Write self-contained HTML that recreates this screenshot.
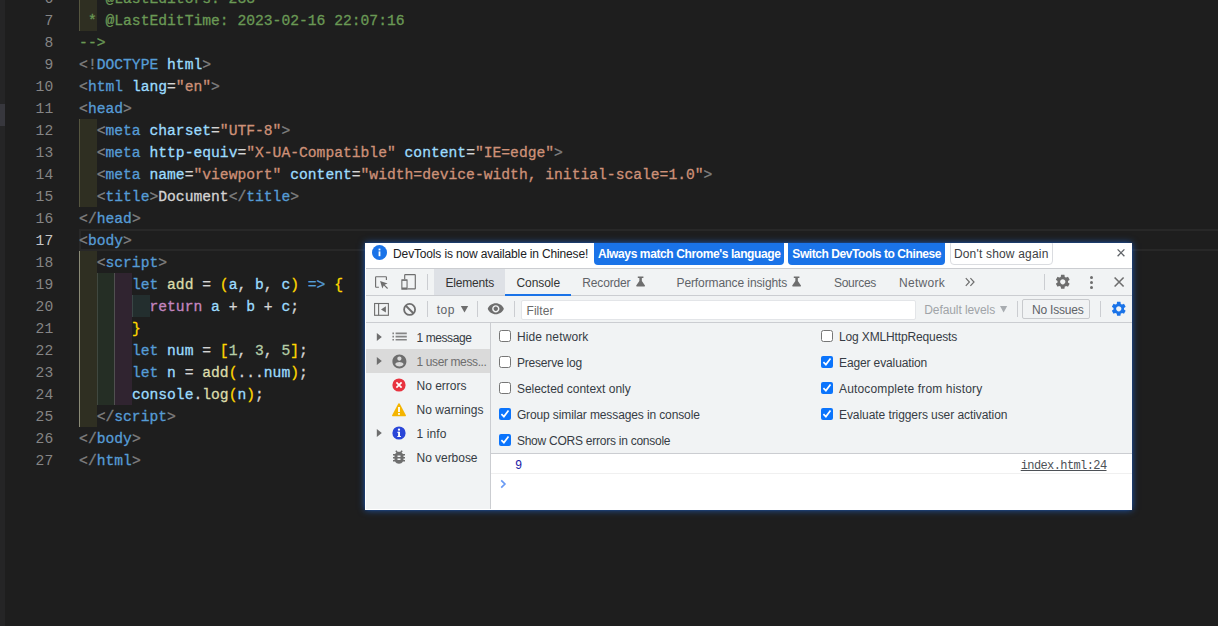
<!DOCTYPE html>
<html>
<head>
<meta charset="utf-8">
<style>
*{box-sizing:border-box;margin:0;padding:0}
html,body{width:1218px;height:626px;overflow:hidden;background:#1e1e1e}
body{position:relative;font-family:"Liberation Sans",sans-serif}
#strip{position:absolute;left:0;top:0;width:5px;height:626px;background:#252526}
#strip i{position:absolute;left:0;top:104px;width:5px;height:22px;background:#37373d}
#ed{position:absolute;left:0;top:-13px;width:1218px;font-family:"Liberation Mono",monospace;font-size:14.667px;line-height:22px;color:#d4d4d4}
.l{position:relative;height:22px}
.n{position:absolute;top:1px;left:18px;width:35.2px;text-align:right;color:#858585}
.c{position:absolute;left:79.1px;top:1px;-webkit-text-stroke:0.3px;white-space:pre}
.cur .n{color:#c6c6c6}
.cur:before{content:"";position:absolute;left:79px;right:0;top:0;height:18px;border:2px solid #282828;border-right:0}
.g{position:absolute;top:0;height:22px}
.g0{left:79px;width:18px;background:#2f2f22;border-left:1px solid #55553f}
.g1{left:97px;width:17px;background:#252e25;border-left:1px solid #404840}
.g2{left:114px;width:18px;background:#302430;border-left:1px solid #505050}
.ga{border-left-color:#8a8a76 !important}
.g3{left:132px;width:18px;background:#232e2e;border-left:1px solid #3a4646}
.cm{color:#6a9955}.gr{color:#808080}.bl{color:#569cd6}.lb{color:#9cdcfe}.or{color:#ce9178}
.ye{color:#ffd700}.fn{color:#dcdcaa}.pk{color:#c586c0}.nu{color:#b5cea8}

#dt{position:absolute;left:365px;top:243px;width:767px;height:267px;overflow:hidden;background:#fff;font-family:"Liberation Sans",sans-serif;font-size:12px;line-height:16px}
#sh{position:absolute;left:365px;top:243px;width:767px;height:267px;box-shadow:0 0 7px rgba(32,105,215,.78),0 0 1.5px rgba(24,60,120,.9)}
#dt div,#dt svg,#dt .t{position:absolute}
#dt .t{white-space:pre;height:16px}
#dt .m{font-family:"Liberation Mono",monospace}
</style>
</head>
<body>
<div id="strip"><i></i></div>
<div id="ed">
<div class="l"><span class="n">6</span><i class="g g0"></i><span class="c cm"> * @LastEditors: 233</span></div>
<div class="l"><span class="n">7</span><i class="g g0"></i><span class="c cm"> * @LastEditTime: 2023-02-16 22:07:16</span></div>
<div class="l"><span class="n">8</span><span class="c cm">--&gt;</span></div>
<div class="l"><span class="n">9</span><span class="c"><span class="gr">&lt;!</span><span class="bl">DOCTYPE</span> <span class="lb">html</span><span class="gr">&gt;</span></span></div>
<div class="l"><span class="n">10</span><span class="c"><span class="gr">&lt;</span><span class="bl">html</span> <span class="lb">lang</span>=<span class="or">"en"</span><span class="gr">&gt;</span></span></div>
<div class="l"><span class="n">11</span><span class="c"><span class="gr">&lt;</span><span class="bl">head</span><span class="gr">&gt;</span></span></div>
<div class="l"><span class="n">12</span><i class="g g0"></i><span class="c">  <span class="gr">&lt;</span><span class="bl">meta</span> <span class="lb">charset</span>=<span class="or">"UTF-8"</span><span class="gr">&gt;</span></span></div>
<div class="l"><span class="n">13</span><i class="g g0"></i><span class="c">  <span class="gr">&lt;</span><span class="bl">meta</span> <span class="lb">http-equiv</span>=<span class="or">"X-UA-Compatible"</span> <span class="lb">content</span>=<span class="or">"IE=edge"</span><span class="gr">&gt;</span></span></div>
<div class="l"><span class="n">14</span><i class="g g0"></i><span class="c">  <span class="gr">&lt;</span><span class="bl">meta</span> <span class="lb">name</span>=<span class="or">"viewport"</span> <span class="lb">content</span>=<span class="or">"width=device-width, initial-scale=1.0"</span><span class="gr">&gt;</span></span></div>
<div class="l"><span class="n">15</span><i class="g g0"></i><span class="c">  <span class="gr">&lt;</span><span class="bl">title</span><span class="gr">&gt;</span>Document<span class="gr">&lt;/</span><span class="bl">title</span><span class="gr">&gt;</span></span></div>
<div class="l"><span class="n">16</span><span class="c"><span class="gr">&lt;/</span><span class="bl">head</span><span class="gr">&gt;</span></span></div>
<div class="l cur"><span class="n">17</span><span class="c"><span class="gr">&lt;</span><span class="bl">body</span><span class="gr">&gt;</span></span></div>
<div class="l"><span class="n">18</span><i class="g g0 ga"></i><span class="c">  <span class="gr">&lt;</span><span class="bl">script</span><span class="gr">&gt;</span></span></div>
<div class="l"><span class="n">19</span><i class="g g0 ga"></i><i class="g g1"></i><i class="g g2"></i><span class="c">      <span class="bl">let</span> <span class="fn">add</span> = <span class="ye">(</span><span class="lb">a</span>, <span class="lb">b</span>, <span class="lb">c</span><span class="ye">)</span> <span class="bl">=&gt;</span> <span class="ye">{</span></span></div>
<div class="l"><span class="n">20</span><i class="g g0 ga"></i><i class="g g1"></i><i class="g g2"></i><i class="g g3"></i><span class="c">        <span class="pk">return</span> <span class="lb">a</span> + <span class="lb">b</span> + <span class="lb">c</span>;</span></div>
<div class="l"><span class="n">21</span><i class="g g0 ga"></i><i class="g g1"></i><i class="g g2"></i><span class="c">      <span class="ye">}</span></span></div>
<div class="l"><span class="n">22</span><i class="g g0 ga"></i><i class="g g1"></i><i class="g g2"></i><span class="c">      <span class="bl">let</span> <span class="lb">num</span> = <span class="ye">[</span><span class="nu">1</span>, <span class="nu">3</span>, <span class="nu">5</span><span class="ye">]</span>;</span></div>
<div class="l"><span class="n">23</span><i class="g g0 ga"></i><i class="g g1"></i><i class="g g2"></i><span class="c">      <span class="bl">let</span> <span class="lb">n</span> = <span class="fn">add</span><span class="ye">(</span>...<span class="lb">num</span><span class="ye">)</span>;</span></div>
<div class="l"><span class="n">24</span><i class="g g0 ga"></i><i class="g g1"></i><i class="g g2"></i><span class="c">      <span class="lb">console</span>.<span class="fn">log</span><span class="ye">(</span><span class="lb">n</span><span class="ye">)</span>;</span></div>
<div class="l"><span class="n">25</span><i class="g g0 ga"></i><span class="c">  <span class="gr">&lt;/</span><span class="bl">script</span><span class="gr">&gt;</span></span></div>
<div class="l"><span class="n">26</span><span class="c"><span class="gr">&lt;/</span><span class="bl">body</span><span class="gr">&gt;</span></span></div>
<div class="l"><span class="n">27</span><span class="c"><span class="gr">&lt;/</span><span class="bl">html</span><span class="gr">&gt;</span></span></div>
</div>
<div id="sh"></div>
<div id="dt">
<div style="left:0px;top:0px;width:767px;height:25px;background:#fff"></div>
<div style="left:0px;top:25px;width:767px;height:1px;background:#cbcdd1"></div>
<svg style="left:7.4px;top:2.3px" width="15" height="15" viewBox="0 0 15 15"><circle cx="7.5" cy="7.5" r="7.5" fill="#1a73e8"/><rect x="6.6" y="6.4" width="1.8" height="4.8" fill="#fff"/><rect x="6.6" y="3.6" width="1.8" height="1.8" fill="#fff"/></svg>
<div style="left:229px;top:-3px;width:190px;height:25px;background:#1a73e8;border-radius:4px"></div>
<div style="left:423px;top:-3px;width:157px;height:25px;background:#1a73e8;border-radius:4px"></div>
<div style="left:584.5px;top:-3px;width:103px;height:25px;background:#fff;border:1px solid #dadce0;border-radius:4px"></div>
<svg style="left:751px;top:5px" width="10" height="10" viewBox="0 0 10 10"><path d="M1.6 1.4l6.8 6.8M8.4 1.4L1.6 8.2" stroke="#5f6368" stroke-width="1.3" fill="none"/></svg>
<div style="left:0px;top:26px;width:767px;height:26px;background:#f1f3f4"></div>
<div style="left:0px;top:52px;width:767px;height:1px;background:#cbcdd1"></div>
<div style="left:69px;top:26px;width:71px;height:26px;background:#dee1e6"></div>
<div style="left:140px;top:50.5px;width:66px;height:2px;background:#1a73e8"></div>
<svg style="left:7px;top:30px" width="18" height="18" viewBox="372 273 18 18"><path d="M378.9 287.2h-2.8a.5 .5 0 0 1-.5-.5v-9.500a.5 .5 0 0 1 .5-.5h9.800a.5 .5 0 0 1 .5 .5v2.700" fill="none" stroke="#6e6e6e" stroke-width="1.15"/><path d="M380.1 281.1l7.5 2.3-3 1.4 3.4 3.3-.8.8-3.4-3.3-1.5 2.9z" fill="#6e6e6e"/></svg>
<svg style="left:34px;top:29px" width="19" height="19" viewBox="399 272 19 19"><path d="M404.7 279.3v-4.100a.5 .5 0 0 1 .5-.5h9.600a.5 .5 0 0 1 .5 .5v13.200a.5 .5 0 0 1-.5 .5h-7.300" fill="none" stroke="#6e6e6e" stroke-width="1.15"/><rect x="401.3" y="279.2" width="6.3" height="10.6" rx=".6" fill="#6e6e6e"/><rect x="402.4" y="280.9" width="4.1" height="6.6" fill="#f1f3f4"/></svg>
<div style="left:62px;top:31px;width:1px;height:16px;background:#cbcdd1"></div>
<svg style="left:269.5px;top:32px" width="11" height="13" viewBox="-1 275 11 13"><path d="M1.8 276.6h5.6v1.3h-1.55v3.1l3.1 4.6q.4.8-.5.8h-7.7q-.9 0-.5-.8l3.1-4.6v-3.1H1.8z" fill="#6e6e6e"/></svg>
<svg style="left:426.3px;top:32px" width="11" height="13" viewBox="-1 275 11 13"><path d="M1.8 276.6h5.6v1.3h-1.55v3.1l3.1 4.6q.4.8-.5.8h-7.7q-.9 0-.5-.8l3.1-4.6v-3.1H1.8z" fill="#6e6e6e"/></svg>
<svg style="left:599px;top:33px" width="12" height="12" viewBox="964 276 12 12"><path d="M965.8 278.2l3.6 3.8-3.6 3.8M970.4 278.2l3.6 3.8-3.6 3.8" fill="none" stroke="#6e6e6e" stroke-width="1.2"/></svg>
<div style="left:679px;top:31px;width:1px;height:16px;background:#cbcdd1"></div>
<svg style="left:689.2px;top:30.2px" width="17.5" height="17.5" viewBox="0 0 24 24"><path fill="#6e6e6e" d="M19.14 12.94c.04-.3.06-.61.06-.94 0-.32-.02-.64-.07-.94l2.03-1.58c.18-.14.23-.41.12-.61l-1.92-3.32c-.12-.22-.37-.29-.59-.22l-2.39.96c-.5-.38-1.03-.7-1.62-.94l-.36-2.54c-.04-.24-.24-.41-.48-.41h-3.84c-.24 0-.43.17-.47.41l-.36 2.54c-.59.24-1.13.57-1.62.94l-2.39-.96c-.22-.08-.47 0-.59.22L2.74 8.87c-.12.21-.08.47.12.61l2.03 1.58c-.05.3-.09.63-.09.94s.02.64.07.94l-2.03 1.58c-.18.14-.23.41-.12.61l1.92 3.32c.12.22.37.29.59.22l2.39-.96c.5.38 1.03.7 1.62.94l.36 2.54c.05.24.24.41.48.41h3.84c.24 0 .44-.17.47-.41l.36-2.54c.59-.24 1.13-.56 1.62-.94l2.39.96c.22.08.47 0 .59-.22l1.92-3.32c.12-.22.07-.47-.12-.61l-2.01-1.58zM12 15.6c-1.98 0-3.6-1.62-3.6-3.6s1.62-3.6 3.6-3.6 3.6 1.62 3.6 3.6-1.62 3.6-3.6 3.6z"/></svg>
<div style="left:724.9px;top:32.8px;width:3.2px;height:3.2px;background:#6e6e6e;border-radius:50%"></div>
<div style="left:724.9px;top:37.7px;width:3.2px;height:3.2px;background:#6e6e6e;border-radius:50%"></div>
<div style="left:724.9px;top:42.6px;width:3.2px;height:3.2px;background:#6e6e6e;border-radius:50%"></div>
<svg style="left:748px;top:33px" width="12" height="12" viewBox="1113 276 12 12"><path d="M1114.6 277.5l9 9M1123.6 277.5l-9 9" stroke="#6e6e6e" stroke-width="1.6" fill="none"/></svg>
<div style="left:0px;top:53px;width:767px;height:26px;background:#f1f3f4"></div>
<div style="left:0px;top:79px;width:767px;height:1px;background:#cbcdd1"></div>
<svg style="left:8px;top:59px" width="17" height="15" viewBox="373 302 17 15"><rect x="374.6" y="303.5" width="13.8" height="11.8" fill="none" stroke="#6e6e6e" stroke-width="1.1"/><path d="M378.6 303.5v11.8" stroke="#6e6e6e" stroke-width="1.1"/><path d="M381 309.4l4.9-3.1v6.2z" fill="#6e6e6e"/></svg>
<svg style="left:37px;top:59px" width="15" height="15" viewBox="402 302 15 15"><circle cx="409.6" cy="309.45" r="5.5" fill="none" stroke="#6e6e6e" stroke-width="1.8"/><path d="M405.6 305.5l8 8" stroke="#6e6e6e" stroke-width="1.8"/></svg>
<div style="left:62px;top:58px;width:1px;height:16px;background:#cbcdd1"></div>
<svg style="left:95px;top:62px" width="9" height="9" viewBox="460 305 9 9"><path d="M460.8 306h7.4l-3.7 6.6z" fill="#6e6e6e"/></svg>
<div style="left:112px;top:58px;width:1px;height:16px;background:#cbcdd1"></div>
<svg style="left:122.2px;top:57.3px" width="17.6" height="17.6" viewBox="0 0 24 24"><path fill="#6e6e6e" d="M12 4.5C7 4.5 2.73 7.61 1 12c1.73 4.39 6 7.5 11 7.5s9.27-3.11 11-7.5c-1.73-4.39-6-7.5-11-7.5zM12 17c-2.76 0-5-2.24-5-5s2.24-5 5-5 5 2.24 5 5-2.24 5-5 5zm0-8c-1.66 0-3 1.34-3 3s1.34 3 3 3 3-1.34 3-3-1.34-3-3-3z"/></svg>
<div style="left:149px;top:58px;width:1px;height:16px;background:#cbcdd1"></div>
<div style="left:156px;top:56.5px;width:395px;height:20px;background:#fff;border:1px solid #e3e5e8;border-radius:2px"></div>
<svg style="left:634px;top:62px" width="9" height="9" viewBox="999 305 9 9"><path d="M1000 306h7.2l-3.6 6.4z" fill="#a8acb0"/></svg>
<div style="left:652px;top:58px;width:1px;height:16px;background:#cbcdd1"></div>
<div style="left:657px;top:56px;width:68px;height:19.5px;border:1px solid #c8cacd;border-radius:2px"></div>
<div style="left:735px;top:58px;width:1px;height:16px;background:#cbcdd1"></div>
<svg style="left:745.2px;top:57.2px" width="17.5" height="17.5" viewBox="0 0 24 24"><path fill="#1a73e8" d="M19.14 12.94c.04-.3.06-.61.06-.94 0-.32-.02-.64-.07-.94l2.03-1.58c.18-.14.23-.41.12-.61l-1.92-3.32c-.12-.22-.37-.29-.59-.22l-2.39.96c-.5-.38-1.03-.7-1.62-.94l-.36-2.54c-.04-.24-.24-.41-.48-.41h-3.84c-.24 0-.43.17-.47.41l-.36 2.54c-.59.24-1.13.57-1.62.94l-2.39-.96c-.22-.08-.47 0-.59.22L2.74 8.87c-.12.21-.08.47.12.61l2.03 1.58c-.05.3-.09.63-.09.94s.02.64.07.94l-2.03 1.58c-.18.14-.23.41-.12.61l1.92 3.32c.12.22.37.29.59.22l2.39-.96c.5.38 1.03.7 1.62.94l.36 2.54c.05.24.24.41.48.41h3.84c.24 0 .44-.17.47-.41l.36-2.54c.59-.24 1.13-.56 1.62-.94l2.39.96c.22.08.47 0 .59-.22l1.92-3.32c.12-.22.07-.47-.12-.61l-2.01-1.58zM12 15.6c-1.98 0-3.6-1.62-3.6-3.6s1.62-3.6 3.6-3.6 3.6 1.62 3.6 3.6-1.62 3.6-3.6 3.6z"/></svg>
<div style="left:0px;top:80px;width:125px;height:187px;background:#f1f3f4"></div>
<div style="left:125px;top:80px;width:1px;height:187px;background:#cbcdd1"></div>
<div style="left:0px;top:106px;width:125px;height:24px;background:#dadada"></div>
<svg style="left:11px;top:89px" width="7" height="10" viewBox="0 0 7 10"><path d="M0.8 0.9l5 4.1-5 4.1z" fill="#6e6e6e"/></svg>
<svg style="left:11px;top:113px" width="7" height="10" viewBox="0 0 7 10"><path d="M0.8 0.9l5 4.1-5 4.1z" fill="#6e6e6e"/></svg>
<svg style="left:11px;top:185px" width="7" height="10" viewBox="0 0 7 10"><path d="M0.8 0.9l5 4.1-5 4.1z" fill="#6e6e6e"/></svg>
<svg style="left:24.6px;top:84.4px" width="19.2" height="19.2" viewBox="0 0 24 24"><path fill="#858585" d="M3 13h2v-2H3v2zm0 4h2v-2H3v2zm0-8h2V7H3v2zm4 4h14v-2H7v2zm0 4h14v-2H7v2zM7 7v2h14V7H7z"/></svg>
<svg style="left:25.6px;top:109.6px" width="16.8" height="16.8" viewBox="0 0 24 24"><path fill="#6e6e6e" d="M12 2C6.48 2 2 6.48 2 12s4.48 10 10 10 10-4.48 10-10S17.52 2 12 2zm0 3c1.66 0 3 1.34 3 3s-1.34 3-3 3-3-1.34-3-3 1.34-3 3-3zm0 14.2c-2.5 0-4.71-1.28-6-3.22.03-1.99 4-3.08 6-3.08 1.99 0 5.97 1.09 6 3.08-1.29 1.94-3.5 3.22-6 3.22z"/></svg>
<svg style="left:27px;top:135px" width="14" height="14" viewBox="0 0 14 14"><circle cx="7" cy="7" r="6.6" fill="#e8333f"/><path d="M4.4 4.4l5.2 5.2M9.6 4.4L4.4 9.6" stroke="#fff" stroke-width="1.7"/></svg>
<svg style="left:26px;top:158.7px" width="16" height="16" viewBox="0 0 16 16"><path d="M8 1.2q.5 0 .8.5l6.1 11.6q.4.9-.6.9H1.700q-1 0-.6-.9L7.200 1.700q.3-.5.8-.5z" fill="#f4b400"/><rect x="7.1" y="5" width="1.8" height="5" fill="#fff"/><rect x="7.1" y="11" width="1.8" height="1.8" fill="#fff"/></svg>
<svg style="left:27px;top:183px" width="14" height="14" viewBox="0 0 14 14"><circle cx="7" cy="7" r="6.6" fill="#2a46d8"/><rect x="6.1" y="5.800" width="1.9" height="5" fill="#fff"/><rect x="5.3" y="5.800" width="2" height="1" fill="#fff"/><rect x="5.3" y="10" width="3.600" height="1" fill="#fff"/><circle cx="7" cy="3.700" r="1.150" fill="#fff"/></svg>
<svg style="left:25.2px;top:204.8px" width="18" height="18" viewBox="0 0 24 24"><path fill="#6e6e6e" d="M20 8h-2.81c-.45-.78-1.07-1.45-1.82-1.96L17 4.41 15.59 3l-2.17 2.17C12.96 5.06 12.49 5 12 5c-.49 0-.96.06-1.41.17L8.41 3 7 4.41l1.62 1.63C7.88 6.55 7.26 7.22 6.81 8H4v2h2.09c-.05.33-.09.66-.09 1v1H4v2h2v1c0 .34.04.67.09 1H4v2h2.81c1.04 1.79 2.97 3 5.19 3s4.15-1.21 5.19-3H20v-2h-2.09c.05-.33.09-.66.09-1v-1h2v-2h-2v-1c0-.34-.04-.67-.09-1H20V8zm-6 8h-4v-2h4v2zm0-4h-4v-2h4v2z"/></svg>
<div style="left:126px;top:80px;width:641px;height:130px;background:#f1f3f4"></div>
<div style="left:126px;top:210px;width:641px;height:1px;background:#cbcdd1"></div>
<div style="left:134px;top:87px;width:12px;height:12px;background:#fff;border:1px solid #767676;border-radius:2.5px"></div>
<div style="left:134px;top:113px;width:12px;height:12px;background:#fff;border:1px solid #767676;border-radius:2.5px"></div>
<div style="left:134px;top:139px;width:12px;height:12px;background:#fff;border:1px solid #767676;border-radius:2.5px"></div>
<svg style="left:134px;top:165px" width="12" height="12" viewBox="0 0 12 12"><rect width="12" height="12" rx="2" fill="#0b74fc"/><path d="M2.400 6.100l2.500 2.500 4.600-6" fill="none" stroke="#fff" stroke-width="1.7"/></svg>
<svg style="left:134px;top:191px" width="12" height="12" viewBox="0 0 12 12"><rect width="12" height="12" rx="2" fill="#0b74fc"/><path d="M2.400 6.100l2.500 2.500 4.600-6" fill="none" stroke="#fff" stroke-width="1.7"/></svg>
<div style="left:456px;top:87px;width:12px;height:12px;background:#fff;border:1px solid #767676;border-radius:2.5px"></div>
<svg style="left:456px;top:113px" width="12" height="12" viewBox="0 0 12 12"><rect width="12" height="12" rx="2" fill="#0b74fc"/><path d="M2.400 6.100l2.500 2.500 4.600-6" fill="none" stroke="#fff" stroke-width="1.7"/></svg>
<svg style="left:456px;top:139px" width="12" height="12" viewBox="0 0 12 12"><rect width="12" height="12" rx="2" fill="#0b74fc"/><path d="M2.400 6.100l2.500 2.500 4.600-6" fill="none" stroke="#fff" stroke-width="1.7"/></svg>
<svg style="left:456px;top:165px" width="12" height="12" viewBox="0 0 12 12"><rect width="12" height="12" rx="2" fill="#0b74fc"/><path d="M2.400 6.100l2.500 2.500 4.600-6" fill="none" stroke="#fff" stroke-width="1.7"/></svg>
<div style="left:126px;top:211px;width:641px;height:56px;background:#fff"></div>
<div style="left:126px;top:230px;width:641px;height:1px;background:#f0f0f0"></div>
<svg style="left:134px;top:235px" width="10" height="12" viewBox="499 478 10 12"><path d="M501.200 480.300l3.700 3.700-3.700 3.700" fill="none" stroke="#6b9bf4" stroke-width="1.7"/></svg>
<span class="t s" style="left:28.1px;top:3.0px;color:#202124;letter-spacing:-0.154px">DevTools is now available in Chinese!</span>
<span class="t s" style="left:232.9px;top:3.0px;color:#ffffff;letter-spacing:-0.388px;font-weight:700">Always match Chrome's language</span>
<span class="t s" style="left:427.3px;top:3.0px;color:#ffffff;letter-spacing:-0.424px;font-weight:700">Switch DevTools to Chinese</span>
<span class="t s" style="left:588.9px;top:3.0px;color:#3c4043;letter-spacing:0.182px">Don't show again</span>
<span class="t s" style="left:80.5px;top:31.5px;color:#333333;letter-spacing:-0.191px">Elements</span>
<span class="t s" style="left:151.5px;top:31.5px;color:#333333;letter-spacing:-0.076px">Console</span>
<span class="t s" style="left:217.3px;top:31.5px;color:#5f6368;letter-spacing:-0.170px">Recorder</span>
<span class="t s" style="left:311.5px;top:31.5px;color:#5f6368;letter-spacing:-0.101px">Performance insights</span>
<span class="t s" style="left:469.0px;top:31.5px;color:#5f6368;letter-spacing:-0.290px">Sources</span>
<span class="t s" style="left:534.1px;top:31.5px;color:#5f6368;letter-spacing:0.269px">Network</span>
<span class="t s" style="left:71.7px;top:58.5px;color:#5f6368;letter-spacing:0.538px">top</span>
<span class="t s" style="left:161.5px;top:59.6px;color:#6a6a6a;letter-spacing:0.055px">Filter</span>
<span class="t s" style="left:559.3px;top:58.5px;color:#a0a4a8;letter-spacing:-0.089px">Default levels</span>
<span class="t s" style="left:667.1px;top:58.5px;color:#5f6368;letter-spacing:-0.218px">No Issues</span>
<span class="t s" style="left:51.5px;top:86.5px;color:#363c44;letter-spacing:-0.411px">1 message</span>
<span class="t s" style="left:51.5px;top:110.5px;color:#6e6e6e;letter-spacing:-0.383px">1 user mess...</span>
<span class="t s" style="left:51.5px;top:134.5px;color:#363c44;letter-spacing:-0.002px">No errors</span>
<span class="t s" style="left:51.5px;top:158.5px;color:#363c44;letter-spacing:0.027px">No warnings</span>
<span class="t s" style="left:51.5px;top:182.5px;color:#363c44;letter-spacing:0.107px">1 info</span>
<span class="t s" style="left:51.5px;top:206.5px;color:#363c44;letter-spacing:-0.037px">No verbose</span>
<span class="t s" style="left:151.9px;top:85.5px;color:#363c44;letter-spacing:0.131px">Hide network</span>
<span class="t s" style="left:151.9px;top:111.5px;color:#363c44;letter-spacing:-0.181px">Preserve log</span>
<span class="t s" style="left:151.9px;top:137.5px;color:#363c44;letter-spacing:-0.013px">Selected context only</span>
<span class="t s" style="left:151.9px;top:163.5px;color:#363c44;letter-spacing:-0.117px">Group similar messages in console</span>
<span class="t s" style="left:151.9px;top:189.5px;color:#363c44;letter-spacing:-0.247px">Show CORS errors in console</span>
<span class="t s" style="left:474.0px;top:85.5px;color:#363c44;letter-spacing:-0.139px">Log XMLHttpRequests</span>
<span class="t s" style="left:474.0px;top:111.5px;color:#363c44;letter-spacing:-0.124px">Eager evaluation</span>
<span class="t s" style="left:474.0px;top:137.5px;color:#363c44;letter-spacing:0.156px">Autocomplete from history</span>
<span class="t s" style="left:474.0px;top:163.5px;color:#363c44;letter-spacing:-0.072px">Evaluate triggers user activation</span>
<span class="t m" style="left:150.1px;top:215.0px;color:#1a1aa6;letter-spacing:-0.600px">9</span>
<span class="t m" style="left:655.7px;top:215.0px;color:#4d5156;letter-spacing:-0.600px;text-decoration:underline">index.html:24</span>
<div style="left:0;top:0;width:767px;height:267px;border-left:1px solid #fff;border-bottom:1px solid #fff"></div>
</div>
</body>
</html>
